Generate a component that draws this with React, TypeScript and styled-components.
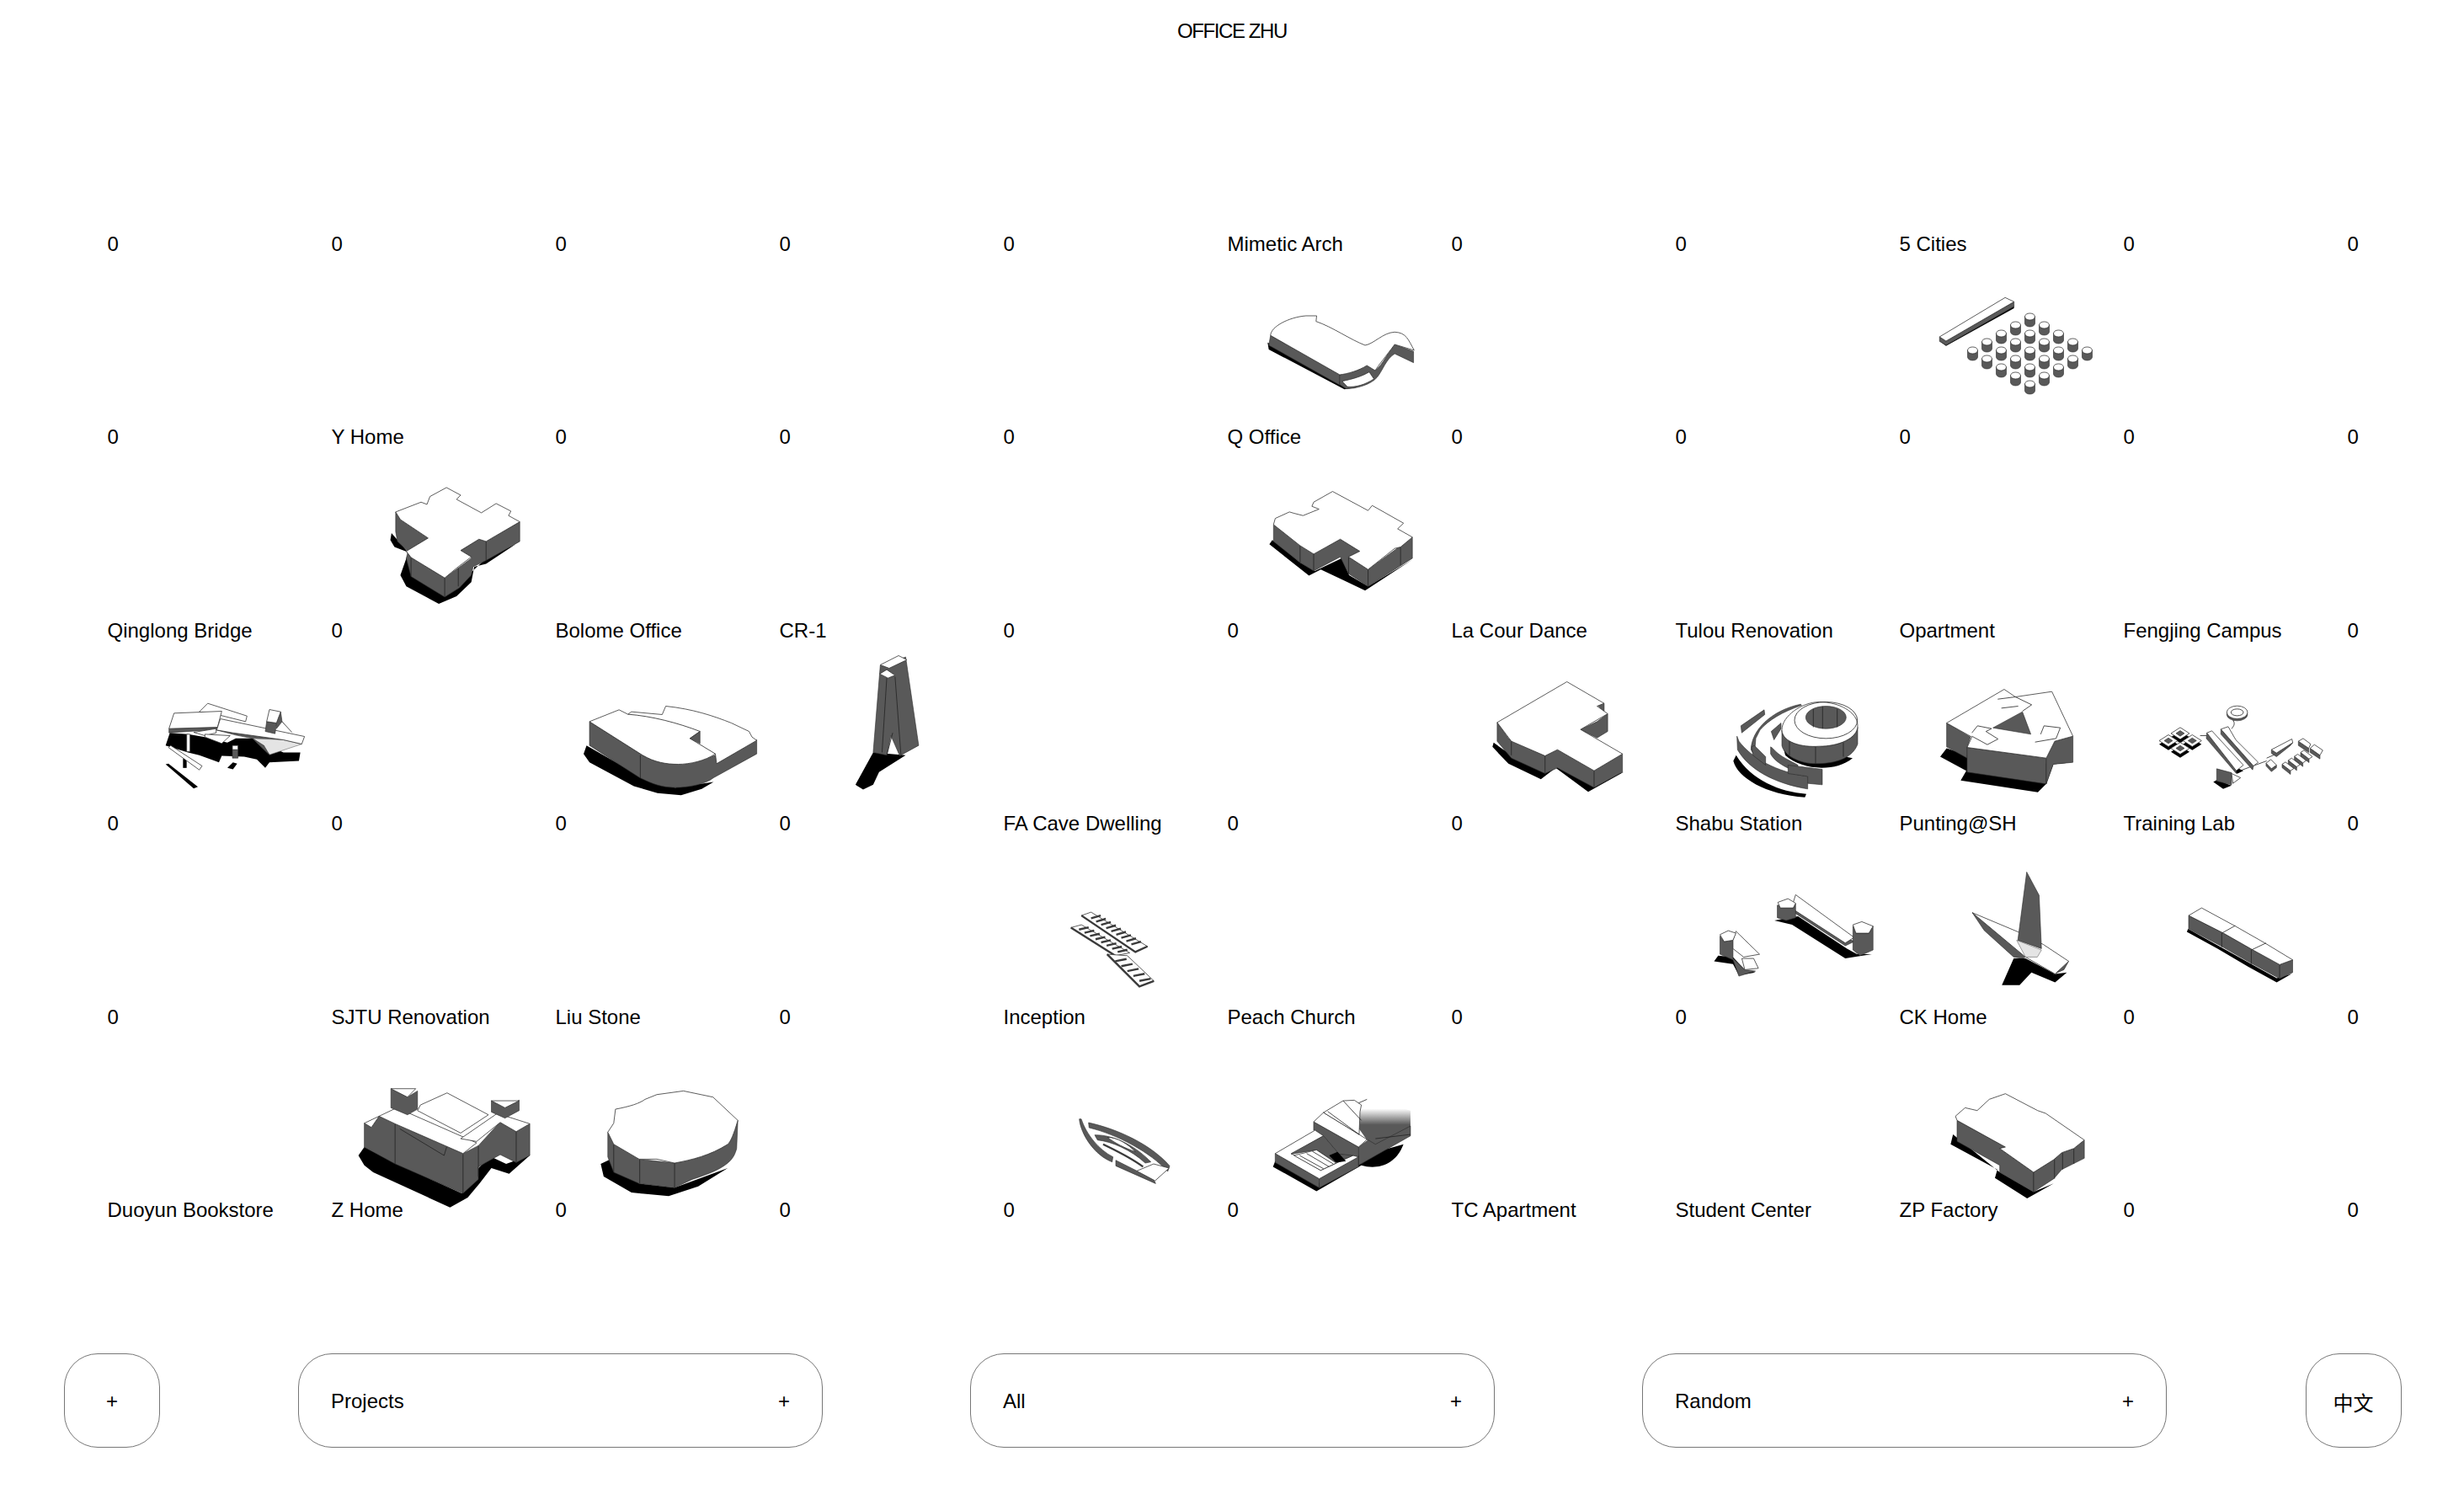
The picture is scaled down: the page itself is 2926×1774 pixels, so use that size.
import React from 'react'
import styled, { createGlobalStyle } from 'styled-components'

const GlobalStyle = createGlobalStyle`
    html, body {
        margin: 0;
        padding: 0;
        background: #fff;
    }
    body {
        font-family: "Liberation Sans", Arial, sans-serif;
        color: #000;
        overflow: hidden;
    }
`;

const Page = styled.div`
    display: flex;
    flex-direction: column;
    width: 2926px;
    height: 1774px;
`;

const Header = styled.header`
    height: 74px;
    line-height: 74px;
    text-align: center;
    font-size: 24px;
    letter-spacing: -1.4px;
`;

const ProjectGrid = styled.main`
    display: grid;
    grid-template-columns: repeat(11, 1fr);
    grid-template-rows: repeat(5, 229.4px) auto;
    margin-top: 201px;
`;

const Cell = styled.div`
    min-width: 0;
`;

const Label = styled.div`
    padding-left: 127.5px;
    height: 30px;
    line-height: 30px;
    font-size: 24px;
    white-space: nowrap;
`;

const Sketch = styled.svg`
    display: block;
    width: 266px;
    height: 199.4px;
    overflow: visible;
`;

const Shade = styled.path`
    fill: #000;
`;

const Wall = styled.path`
    fill: #595959;
    stroke: #2a2a2a;
    stroke-width: 0.6;
    stroke-linejoin: round;
    vector-effect: non-scaling-stroke;
`;

const Roof = styled.path`
    fill: #fff;
    stroke: #333;
    stroke-width: 0.8;
    stroke-linejoin: round;
    vector-effect: non-scaling-stroke;
`;

const Pale = styled.path`
    fill: #e4e4e4;
    stroke: #666;
    stroke-width: 0.6;
    vector-effect: non-scaling-stroke;
`;

const Edge = styled.path`
    fill: none;
    stroke: #222;
    stroke-width: 0.8;
    vector-effect: non-scaling-stroke;
`;

const Rib = styled.path`
    fill: none;
    stroke: #3a3a3a;
    stroke-width: 2.4;
    vector-effect: non-scaling-stroke;
`;

const Footer = styled.footer`
    display: grid;
    grid-template-columns: repeat(11, 1fr);
    align-items: center;
    margin-top: auto;
    padding-bottom: 55px;
`;

const Pill = styled.button`
    display: flex;
    align-items: center;
    justify-content: center;
    justify-self: center;
    box-sizing: border-box;
    width: 114px;
    height: 112px;
    padding: 2px 0 0;
    border: 1px solid #777;
    border-radius: 40px;
    background: none;
    color: #000;
    font-family: "Liberation Sans", "Noto Sans CJK SC", sans-serif;
    font-size: 24px;
`;

const LangPill = styled(Pill)`
    margin-left: 3px;
`;

const WidePill = styled(Pill)`
    grid-column: span 3;
    justify-content: space-between;
    width: 623px;
    margin-left: 1px;
    padding: 2px 38px 0 38px;
`;

// the source crops were taken at these origins and scales
const FRAME_A = 'translate(1400 260) scale(.7018 .3333)';
const FRAME_B = 'translate(100 500) scale(.7018 .3333)';
const FRAME_C = 'translate(1700 740) scale(.7018 .3333)';
const FRAME_D = 'translate(1200 1000) scale(.9566 .3333)';
const FRAME_E = 'translate(380 1240) scale(.7018 .3333)';
const FRAME_Q = 'translate(180 810) scale(.3333)';
const FRAME_T = 'translate(2040 800) scale(.3333)';
const FRAME_F = 'translate(2540 820) scale(.3333)';
const FRAME_P = 'translate(1270 1290) scale(.3333)';

const diamond = (cx: number, cy: number, rx: number, ry: number) =>
    `M${cx - rx} ${cy} L${cx} ${cy - ry} L${cx + rx} ${cy} L${cx} ${cy + ry} Z`;

const rungs = (x1: number, y1: number, x2: number, y2: number, wx: number, wy: number, n: number) => {
    let d = '';
    for (let i = 0; i <= n; i++) {
        const x = x1 + ((x2 - x1) * i) / n;
        const y = y1 + ((y2 - y1) * i) / n;
        d += `M${x} ${y} L${x + wx} ${y + wy} `;
    }
    return d;
};

const MimeticArch = () => (
    <g transform={FRAME_A}>
        <Shade d="M150 440 L152 465 L280 607 L300 600 L280 590 L272 580 Z" />
        <Wall d="M155 415 L272 555 L272 592 L152 450 Z" />
        <Wall d="M272 555 C285 550 300 540 318 522 L332 540 C345 520 355 470 365 447 L397 472 L397 512 L365 480 C350 500 345 540 335 565 C325 590 300 605 283 605 L272 590 Z" />
        <Roof d="M276 578 C295 570 310 560 322 545 L330 570 C315 590 300 600 285 598 Z" />
        <Roof d="M155 415 C155 385 185 350 215 345 L233 345 L232 365 C260 385 290 430 315 450 C330 445 345 405 365 403 C385 405 388 430 398 468 L365 447 C350 490 338 520 332 540 L318 522 C305 540 285 552 272 555 Z" />
    </g>
);

const stoolGrid: number[][] = [];
for (let j = 0; j < 5; j++) {
    for (let i = 0; i < 5; i++) {
        stoolGrid.push([2410.5 + (i - j) * 17, 376 + (i + j) * 10]);
    }
}

const FiveCities = () => (
    <g>
        <g transform={FRAME_A}>
            <Shade d="M1287 435 L1298 452 L1413 318 L1413 310 L1298 440 Z" />
            <Wall d="M1287 420 L1298 435 L1413 295 L1413 312 L1298 450 L1287 436 Z" />
            <Roof d="M1287 420 L1398 280 L1413 295 L1298 435 Z" />
        </g>
        {stoolGrid.map(([x, y]) => (
            <g key={`${x}-${y}`}>
                <Wall d={`M${x - 6} ${y} V${y + 8} A6 4 0 0 0 ${x + 6} ${y + 8} V${y} Z`} />
                <Roof as="ellipse" cx={x} cy={y} rx={6} ry={4} />
            </g>
        ))}
    </g>
);

const QOffice = () => (
    <g transform={FRAME_A}>
        <Shade d="M158 1145 L153 1160 L220 1272 L240 1250 L280 1290 L315 1325 L395 1215 L320 1310 L288 1270 L275 1210 L230 1255 L205 1225 Z" />
        <Wall d="M160 1090 L228 1195 L273 1142 L306 1185 L287 1205 L320 1250 L395 1135 L395 1210 L320 1310 L287 1265 L273 1205 L228 1255 L205 1225 L160 1150 Z" />
        <Edge d="M205 1165 V1225 M228 1195 V1255 M320 1250 V1310 M375 1170 V1235 M287 1205 V1265" />
        <Roof d="M260 972 L320 1040 L327 1022 L380 1085 L370 1105 L395 1135 L375 1170 L365 1175 L320 1250 L287 1205 L306 1185 L273 1142 L228 1195 L205 1165 L160 1090 L163 1068 L187 1045 L195 1050 L210 1058 L237 1035 L225 1025 L228 1010 Z" />
    </g>
);

const YHome = () => (
    <g transform={FRAME_B}>
        <Shade d="M520 400 L518 425 L525 450 L550 470 L545 490 L535 550 L545 590 L600 652 L630 625 L655 575 L660 520 L680 510 L730 440 L680 490 L655 540 L610 620 Z" />
        <Wall d="M527 325 L535 352 L582 418 L545 465 L553 487 L610 560 L655 490 L655 485 L637 462 L668 422 L680 430 L737 360 L737 430 L680 498 L658 520 L655 550 L635 595 L610 628 L553 555 L545 490 L548 465 L530 430 L527 395 Z" />
        <Edge d="M680 430 V498 M610 560 V628 M633 525 V590 M553 487 V555" />
        <Roof d="M613 238 L637 265 L630 280 L672 328 L697 295 L722 322 L718 338 L737 360 L680 430 L668 422 L637 462 L655 485 L630 525 L610 560 L553 487 L545 465 L582 418 L535 352 L527 325 L570 290 L580 298 L585 270 Z" />
    </g>
);

const QinglongBridge = () => (
    <g transform={FRAME_Q}>
        <Shade d="M65 180 L50 225 L130 250 L170 260 L240 285 L250 262 L330 265 L375 275 L405 305 L420 285 L525 280 L530 250 L470 250 L400 220 L360 200 L300 200 L270 215 L190 195 L130 185 Z" />
        <Shade d="M270 305 L290 285 L305 290 L290 310 Z" />
        <Shade d="M50 292 L60 290 L165 372 L150 378 Z" />
        <Shade d="M112 270 H125 V305 H112 Z" />
        <Roof d="M200 75 L340 120 L335 140 L235 115 L170 105 Z" />
        <Wall d="M62 165 L235 160 L232 168 L62 180 Z" />
        <Roof d="M80 110 L250 103 L235 160 L62 165 Z" />
        <Roof d="M150 178 L230 165 L230 180 L190 190 Z" />
        <Roof d="M190 185 L280 190 L250 218 L190 195 Z" />
        <Wall d="M232 170 L290 180 L470 205 L420 212 L300 188 Z" />
        <Pale d="M360 200 L470 205 L535 220 L420 258 Z" />
        <Wall d="M360 200 L420 258 L400 225 Z" />
        <Roof d="M245 130 L545 193 L535 220 L470 205 L290 180 L232 170 Z" />
        <Wall d="M460 105 L465 140 L445 165 L445 145 Z" />
        <Edge d="M465 140 L500 178" />
        <Wall d="M410 140 L445 145 L440 183 L405 175 Z" />
        <Roof d="M420 97 L460 105 L445 145 L410 140 Z" />
        <Roof d="M125 185 H137 V247 H125 Z" />
        <Wall d="M288 240 H308 V270 H288 Z" />
        <Roof d="M288 225 H308 V240 H288 Z" />
        <Roof d="M60 232 L68 225 L180 298 L170 312 Z" />
    </g>
);

const BolomeOffice = () => (
    <g transform={FRAME_B}>
        <Shade d="M850 1155 L845 1185 L855 1215 L930 1300 L970 1325 L1010 1332 L1045 1310 L1065 1285 L1000 1305 L945 1270 Z" />
        <Wall d="M855 1070 L945 1190 L975 1215 L1005 1222 L1040 1210 L1068 1190 L1072 1215 L1138 1135 L1138 1185 L1065 1270 C1050 1295 1020 1305 1000 1305 C975 1305 960 1290 940 1270 L855 1155 Z" />
        <Edge d="M941 1190 V1272" />
        <Roof d="M855 1070 L905 1028 L920 1044 L926 1035 L978 1045 L984 1015 C1030 1025 1065 1050 1095 1075 L1125 1105 L1130 1125 L1138 1137 L1070 1220 L1068 1185 C1050 1210 1025 1222 1005 1222 C985 1222 965 1215 945 1190 Z" />
        <Edge d="M920 1044 C960 1050 1005 1075 1042 1105 L1025 1130 L1068 1185" />
        <Wall d="M1042 1105 L1042 1148 L1025 1130 Z" />
    </g>
);

const CrOne = () => (
    <g transform={FRAME_B}>
        <Shade d="M1335 1180 L1305 1295 L1318 1312 L1335 1295 L1345 1250 L1390 1190 Z" />
        <Wall d="M1347 870 L1390 840 L1412 1155 L1380 1192 L1365 1120 L1358 1190 L1335 1180 Z" />
        <Edge d="M1372 910 L1382 1190 M1358 915 L1350 1180 M1368 1110 L1358 1190" />
        <Roof d="M1378 835 L1392 850 L1362 880 L1347 868 Z" />
        <Roof d="M1358 885 L1372 905 L1360 915 L1346 900 Z" />
    </g>
);

const LaCourDance = () => (
    <g transform={FRAME_C}>
        <Shade d="M105 425 L103 440 L130 500 L185 555 L210 515 L265 600 L325 530 L275 560 L212 510 L190 520 L135 470 Z" />
        <Wall d="M111 353 L130 410 L192 472 L213 450 L275 525 L323 465 L323 530 L275 585 L213 515 L192 535 L135 480 L111 420 Z" />
        <Edge d="M192 472 V535 M275 525 V585 M135 415 V470" />
        <Wall d="M280 350 L298 322 L298 385 L280 408 L252 378 Z" />
        <Wall d="M280 290 L292 285 L292 315 Z" />
        <Roof d="M229 208 L292 285 L280 295 L298 322 L252 378 L323 465 L275 525 L213 450 L192 472 L135 420 L111 353 Z" />
    </g>
);

const TulouRenovation = () => (
    <g transform={FRAME_T}>
        <Shade d="M55 310 C70 370 170 430 310 440 L315 428 C220 420 120 380 65 290 Z" />
        <Shade d="M230 250 L240 290 C300 345 420 350 480 300 Z" />
        <Wall d="M82 185 L165 128 L167 145 L85 210 Z" />
        <Wall d="M118 270 C120 200 190 130 295 108 L298 112 C230 135 180 165 150 200 L135 230 L130 290 Z" />
        <Wall d="M68 222 L70 270 C110 340 200 390 320 410 L320 365 C210 350 120 300 75 240 Z" />
        <Wall d="M120 260 L125 290 L170 325 L170 295 L130 255 Z" />
        <Wall d="M190 205 L225 175 L225 195 L200 235 Z" />
        <Wall d="M228 200 C230 240 290 260 360 258 C430 258 495 230 498 190 L498 250 C480 300 420 320 350 320 C290 320 235 290 228 255 Z" />
        <Edge d="M255 235 V290 M348 258 V320 M447 245 V295" />
        <Wall d="M188 260 L195 265 C220 295 260 310 285 325 L285 350 C240 335 200 310 188 285 Z" />
        <Wall d="M250 325 L372 340 L372 395 L320 390 L320 365 L250 355 Z" />
        <Roof d="M362 100 C300 100 228 150 228 200 C230 245 300 262 360 258 C430 258 498 230 498 185 C498 135 430 100 362 100 Z" />
        <Edge as="ellipse" cx={385} cy={165} rx={112} ry={65} />
        <Wall as="ellipse" cx={385} cy={155} rx={72} ry={40} />
        <Edge d="M340 125 V190 M373 116 V195 M425 125 V190" />
    </g>
);

const Opartment = () => (
    <g transform={FRAME_T}>
        <Shade d="M815 265 L792 295 L885 345 L865 380 L1140 422 L1170 392 L1195 322 L1265 315 L1170 320 L888 290 Z" />
        <Wall d="M815 175 L900 225 L888 262 L888 300 L815 260 Z" />
        <Wall d="M888 262 L1170 300 L1170 392 L888 350 Z" />
        <Wall d="M1170 300 L1200 240 L1265 222 L1265 315 L1195 322 L1170 392 Z" />
        <Roof d="M815 175 L1020 55 L1060 82 L1190 63 L1265 222 L1200 240 L1170 300 L888 262 L905 225 Z" />
        <Wall d="M980 192 L1085 135 L1115 215 Z" />
        <Edge d="M997 90 L1060 82 L1118 110 L1085 133 M1010 122 L1070 115 M905 210 L925 185 L975 195 L955 205 L998 232 L960 252 L905 222 M1150 215 L1162 185 L1220 192 L1205 230 L1130 243" />
    </g>
);

const campusLots = [[147, 152], [105, 178], [190, 178], [147, 205]];
const campusComb = [[530, 270], [552, 256], [574, 242], [596, 228]];

const FengjingCampus = () => (
    <g transform={FRAME_F}>
        <Edge d="M218 160 H240 M360 285 L455 250 M455 240 L490 225 M330 97 C340 110 345 120 330 135" />
        <Wall as="ellipse" cx={350} cy={84} rx={37} ry={23} />
        <Roof as="ellipse" cx={350} cy={77} rx={37} ry={23} />
        <Edge as="ellipse" cx={350} cy={77} rx={22} ry={12} />
        {campusLots.map(([x, y]) => (
            <g key={`${x}-${y}`}>
                <Shade d={diamond(x, y + 13, 33, 21)} />
                <Roof d={diamond(x, y, 33, 21)} />
                <Wall d={diamond(x, y, 15, 10)} />
            </g>
        ))}
        <Shade d="M240 160 L340 285 L350 296 L372 285 L350 275 L250 160 Z" />
        <Wall d="M242 150 L347 272 L347 295 L240 170 Z" />
        <Roof d="M242 150 L260 143 L372 265 L347 285 Z" />
        <Wall d="M292 137 L408 268 L405 282 L292 155 Z" />
        <Roof d="M292 137 L318 128 L345 175 L425 255 L408 268 Z" />
        <Shade d="M265 325 L300 350 L330 338 L277 318 Z" />
        <Wall d="M277 278 L330 292 L330 335 L277 322 Z" />
        <Roof d="M330 295 L362 310 L335 330 Z" />
        <Wall d="M472 210 L490 222 L548 185 L540 195 L490 235 L472 223 Z" />
        <Roof d="M472 210 L545 172 L548 185 L490 222 Z" />
        <Wall d="M453 258 L472 278 L490 265 L490 274 L472 288 L453 268 Z" />
        <Roof d="M453 258 L470 245 L490 265 L472 278 Z" />
        {campusComb.map(([x, y]) => (
            <g key={x}>
                <Wall d={`M${x - 20} ${y - 8} L${x + 10} ${y + 15} L${x + 10} ${y + 28} L${x - 20} ${y + 4} Z`} />
                <Roof d={`M${x - 20} ${y - 8} L${x - 8} ${y - 16} L${x + 22} ${y + 7} L${x + 10} ${y + 15} Z`} />
            </g>
        ))}
        <Wall d="M568 180 L605 205 L605 220 L568 195 Z" />
        <Roof d="M568 180 L585 170 L612 190 L605 205 Z" />
        <Wall d="M610 205 L645 230 L645 243 L610 220 Z" />
        <Roof d="M610 205 L625 192 L655 212 L645 230 Z" />
    </g>
);

const FaCaveDwelling = () => (
    <g transform={FRAME_D}>
        <Roof d="M75 305 L88 295 L148 395 L130 405 Z" />
        <Rib d={rungs(85, 312, 133, 392, 12, -8, 7)} />
        <Rib d="M75 305 L130 405" />
        <Roof d="M88 262 L100 250 L170 372 L155 392 Z" />
        <Rib d={rungs(100, 272, 150, 365, 12, -10, 8)} />
        <Rib d="M88 262 L155 392 L170 372" />
        <Roof d="M120 400 L145 405 L178 495 L160 515 Z" />
        <Rib d={rungs(130, 425, 160, 495, 14, -8, 4)} />
        <Rib d="M120 400 L160 515 L178 495" />
    </g>
);

const ShabuStation = () => (
    <g transform={FRAME_C}>
        <Shade d="M580 1060 L610 1075 L700 1195 L745 1180 L720 1180 L703 1160 L620 1045 Z" />
        <Wall d="M616 1035 L700 1150 L715 1135 L612 1020 Z" />
        <Roof d="M616 968 L715 1120 L700 1140 L612 1020 L612 995 Z" />
        <Wall d="M585 1005 L612 1015 L616 1000 V1050 L600 1060 L585 1050 Z" />
        <Roof d="M586 995 L603 982 L616 998 L612 1015 L590 1015 Z" />
        <Wall d="M713 1080 L718 1105 L740 1105 L747 1080 V1165 L725 1185 L713 1165 Z" />
        <Roof d="M713 1075 L728 1064 L747 1080 L740 1105 L718 1105 Z" />
        <Shade d="M485 1185 L478 1205 L510 1215 L520 1255 L548 1245 L530 1235 L510 1190 Z" />
        <Wall d="M488 1115 L495 1135 L510 1130 V1195 L530 1235 L548 1240 L520 1258 L510 1200 L488 1180 Z" />
        <Roof d="M515 1098 L555 1180 L528 1190 L510 1160 L510 1130 Z" />
        <Roof d="M525 1195 L545 1195 L553 1230 L530 1235 Z" />
        <Roof d="M488 1110 L502 1096 L515 1105 L510 1130 L495 1135 Z" />
    </g>
);

const PuntingSh = () => (
    <g transform={FRAME_C}>
        <Shade d="M985 1195 L965 1290 L995 1290 L1015 1245 L1055 1280 L1075 1245 L1055 1250 L1005 1195 Z" />
        <Wall d="M915 1032 L1005 1190 L1000 1195 L985 1190 L935 1095 Z" />
        <Wall d="M1055 1250 L1078 1205 L1070 1235 L1052 1252 Z" />
        <Roof d="M915 1032 L992 1100 L1035 1145 L1078 1205 L1055 1250 L1005 1190 Z" />
        <Wall d="M1007 887 L1028 970 L1032 1160 L992 1130 Z" />
        <Pale d="M990 1130 L1032 1165 L1025 1190 L1005 1190 Z" />
    </g>
);

const TrainingLab = () => (
    <g transform={FRAME_C}>
        <Shade d="M1280 1090 L1278 1100 L1330 1160 L1382 1225 L1430 1280 L1455 1250 L1430 1265 Z" />
        <Wall d="M1281 1042 L1340 1105 L1390 1165 L1435 1217 L1457 1200 V1245 L1435 1267 L1385 1210 L1335 1150 L1281 1090 Z" />
        <Edge d="M1337 1105 V1155 M1387 1165 V1215 M1435 1217 V1265" />
        <Roof d="M1303 1015 L1360 1080 L1410 1140 L1457 1200 L1435 1217 L1390 1165 L1340 1105 L1281 1042 Z" />
        <Edge d="M1337 1105 L1360 1078 M1387 1165 L1412 1140" />
    </g>
);

const SjtuRenovation = () => (
    <g transform={FRAME_E}>
        <Shade d="M65 395 L75 430 L90 455 L220 580 L250 545 L270 495 L290 440 L320 460 L355 395 L315 425 L290 400 L270 435 L240 530 L125 420 L75 365 Z" />
        <Roof d="M170 215 L215 172 L285 250 L238 315 L165 235 Z" />
        <Wall d="M75 280 L87 295 L100 255 L127 282 L242 388 L268 360 L304 277 L332 310 L355 282 L355 395 L332 420 L305 392 L268 435 L268 480 L242 530 L127 425 L75 365 Z" />
        <Edge d="M127 282 V425 M242 390 V530 M332 310 V420 M268 360 V470 M135 300 L210 395 L215 360" />
        <Roof d="M75 280 L130 225 L265 350 L242 388 L127 282 L100 255 L87 295 Z" />
        <Roof d="M238 335 L300 245 L355 282 L332 310 L305 277 L265 345 Z" />
        <Wall d="M120 157 V225 L148 250 L165 230 V165 L148 187 Z" />
        <Roof d="M120 157 H162 L148 187 Z" />
        <Wall d="M290 200 V240 L313 262 L337 235 V198 L313 225 Z" />
        <Roof d="M290 200 H337 L313 225 Z" />
    </g>
);

const LiuStone = () => (
    <g transform={FRAME_E}>
        <Shade d="M475 425 L480 470 L527 527 L590 540 L640 505 L690 440 L600 510 L540 495 L490 410 Z" />
        <Wall d="M487 312 L540 408 L600 422 C640 410 680 385 707 270 L705 370 C700 410 690 440 630 480 L600 510 L540 495 L497 455 L487 400 Z" />
        <Edge d="M497 355 V455 M541 408 V495 M600 422 V510" />
        <Roof d="M500 230 C525 220 540 210 550 195 L570 178 L615 165 L665 187 L707 270 C700 320 695 345 690 355 C660 395 630 410 600 422 L570 408 L540 408 L497 355 L487 312 L497 280 Z" />
    </g>
);

const Inception = () => (
    <g transform={FRAME_P}>
        <Wall d="M35 115 L42 115 C60 170 105 225 155 250 L152 268 C90 245 40 170 35 115 Z" />
        <Wall d="M68 128 C170 150 290 205 357 282 L350 302 C290 235 170 170 70 146 Z" />
        <Wall d="M90 172 C160 170 240 215 290 268 L270 272 C220 225 150 195 100 190 Z" />
        <Roof d="M135 180 C170 180 210 205 235 232 C200 220 160 200 135 180 Z" />
        <Rib d="M120 205 C160 225 215 250 262 285" />
        <Wall d="M165 262 L300 330 L307 345 L165 282 Z" />
        <Roof d="M240 300 L300 275 L355 290 L305 335 Z" />
    </g>
);

const PeachChurch = () => (
    <g transform={FRAME_P}>
        <defs>
            <linearGradient id="dome-fade" x1="0" y1="0" x2="0" y2="1">
                <stop offset="0" stopColor="#fff" />
                <stop offset="0.2" stopColor="#fff" />
                <stop offset="0.55" stopColor="#595959" />
                <stop offset="1" stopColor="#595959" />
            </linearGradient>
        </defs>
        <Shade d="M725 285 L880 372 L1040 280 C1090 295 1160 285 1190 205 L1030 250 L885 345 L733 265 Z" />
        <path d="M1035 90 C1045 70 1060 50 1075 45 L1215 85 V175 L1090 210 L1060 190 L1032 150 Z" fill="url(#dome-fade)" />
        <Wall d="M733 238 L890 328 L890 360 L733 270 Z" />
        <Wall d="M890 328 L1030 245 L1030 280 L1215 175 V140 L1090 205 L1065 190 L1030 215 L1030 285 L890 360 Z" />
        <Wall d="M870 125 L1030 215 L1030 250 L960 240 L905 175 L870 155 Z" />
        <Roof d="M733 238 L875 155 L905 175 L790 238 L895 298 L1010 245 L1030 250 L890 328 Z" />
        <Wall d="M790 240 L905 175 L960 240 L1010 245 L950 270 L880 225 Z" />
        <Shade d="M925 245 L955 232 L985 265 L950 270 Z" />
        <Roof d="M800 245 L880 225 L950 272 L895 298 Z" />
        <Edge d="M820 245 L905 292 M845 238 L925 285 M865 230 L940 275" />
        <Roof d="M870 125 L905 92 L1032 170 L1060 188 L1030 215 Z" />
        <Roof d="M905 92 L975 50 L1015 48 L1040 65 L1035 90 L1032 170 Z" />
        <Edge d="M920 88 L1032 170 M975 50 L1040 120 M1030 58 L1060 45 M1090 185 L1215 170" />
    </g>
);

const CkHome = () => (
    <g transform={FRAME_D}>
        <Shade d="M1170 1040 L1167 1075 L1225 1165 L1222 1195 L1262 1268 L1295 1215 L1270 1245 L1228 1175 Z" />
        <Wall d="M1175 990 L1235 1085 L1228 1090 L1270 1175 L1295 1130 L1305 1105 L1320 1090 L1333 1060 V1125 L1305 1165 L1295 1198 L1270 1245 L1228 1175 L1228 1150 L1175 1065 Z" />
        <Edge d="M1270 1175 V1245 M1296 1130 V1198 M1306 1105 V1165 M1320 1090 V1145" />
        <Roof d="M1173 975 L1185 945 L1200 955 L1215 915 L1235 895 L1275 955 L1285 965 L1333 1060 L1320 1090 L1305 1105 L1295 1130 L1270 1175 L1228 1090 L1235 1085 L1175 990 Z" />
    </g>
);

const sketches: Record<string, () => React.ReactElement> = {
    'Mimetic Arch': MimeticArch,
    '5 Cities': FiveCities,
    'Y Home': YHome,
    'Q Office': QOffice,
    'Qinglong Bridge': QinglongBridge,
    'Bolome Office': BolomeOffice,
    'CR-1': CrOne,
    'La Cour Dance': LaCourDance,
    'Tulou Renovation': TulouRenovation,
    'Opartment': Opartment,
    'Fengjing Campus': FengjingCampus,
    'FA Cave Dwelling': FaCaveDwelling,
    'Shabu Station': ShabuStation,
    'Punting@SH': PuntingSh,
    'Training Lab': TrainingLab,
    'SJTU Renovation': SjtuRenovation,
    'Liu Stone': LiuStone,
    'Inception': Inception,
    'Peach Church': PeachChurch,
    'CK Home': CkHome,
};

const rows = [
    ['0', '0', '0', '0', '0', 'Mimetic Arch', '0', '0', '5 Cities', '0', '0'],
    ['0', 'Y Home', '0', '0', '0', 'Q Office', '0', '0', '0', '0', '0'],
    ['Qinglong Bridge', '0', 'Bolome Office', 'CR-1', '0', '0', 'La Cour Dance', 'Tulou Renovation', 'Opartment', 'Fengjing Campus', '0'],
    ['0', '0', '0', '0', 'FA Cave Dwelling', '0', '0', 'Shabu Station', 'Punting@SH', 'Training Lab', '0'],
    ['0', 'SJTU Renovation', 'Liu Stone', '0', 'Inception', 'Peach Church', '0', '0', 'CK Home', '0', '0'],
    ['Duoyun Bookstore', 'Z Home', '0', '0', '0', '0', 'TC Apartment', 'Student Center', 'ZP Factory', '0', '0'],
];

export default function App() {
    return (
        <Page>
            <GlobalStyle />
            <Header>OFFICE ZHU</Header>

            <ProjectGrid>
                {rows.map((row, r) =>
                    row.map((name, c) => {
                        const Drawing = sketches[name];
                        return (
                            <Cell key={`${r}-${c}`}>
                                <Label>{name}</Label>
                                {Drawing && (
                                    <Sketch viewBox={`${c * 266} ${305 + r * 229.4} 266 199.4`}>
                                        <Drawing />
                                    </Sketch>
                                )}
                            </Cell>
                        );
                    })
                )}
            </ProjectGrid>

            <Footer>
                <Pill>+</Pill>
                <WidePill><span>Projects</span><span>+</span></WidePill>
                <WidePill><span>All</span><span>+</span></WidePill>
                <WidePill><span>Random</span><span>+</span></WidePill>
                <LangPill>中文</LangPill>
            </Footer>
        </Page>
    )
}
